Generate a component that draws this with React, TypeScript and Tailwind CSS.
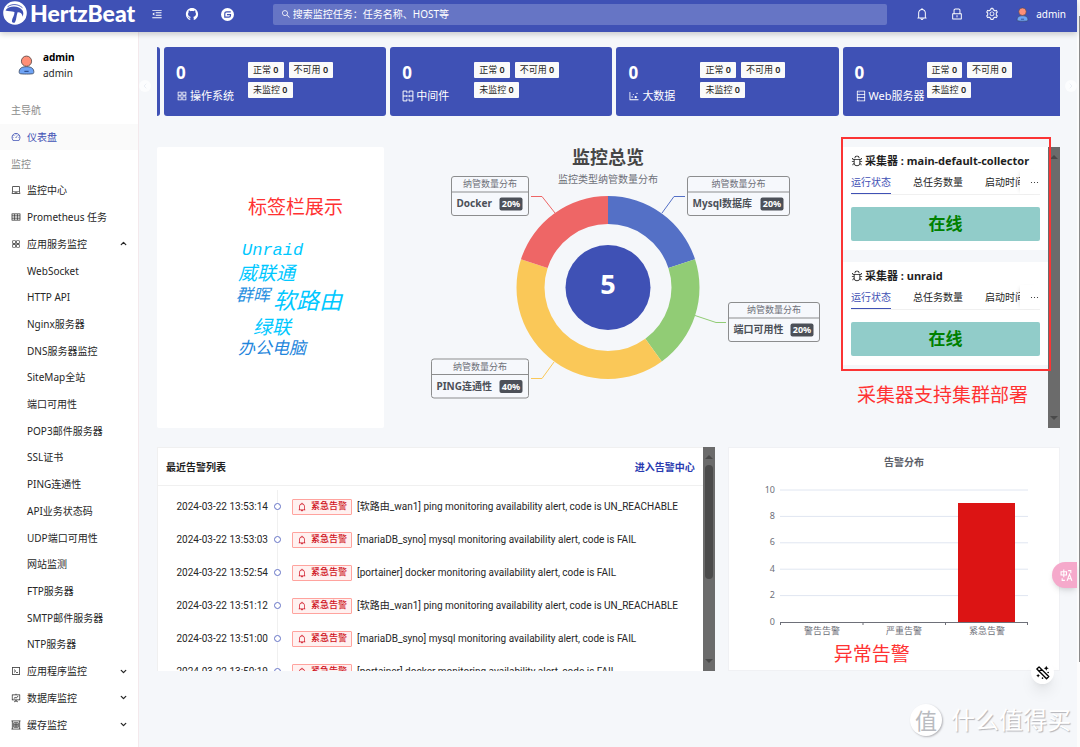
import React, { useState } from 'react';
import {
  AiFillGithub,
  AiOutlineAppstore,
  AiOutlineBell,
  AiOutlineBug,
  AiOutlineCode,
  AiOutlineDashboard,
  AiOutlineDatabase,
  AiOutlineDotChart,
  AiOutlineEllipsis,
  AiOutlineFundProjectionScreen,
  AiOutlineLaptop,
  AiOutlineLock,
  AiOutlineMenuFold,
  AiOutlineSearch,
  AiOutlineSetting,
  AiOutlineTable,
} from 'react-icons/ai';
import { ChevronDown, ChevronLeft, ChevronRight, ChevronUp } from 'lucide-react';

const SERVICE_ITEMS = [
  'WebSocket', 'HTTP API', 'Nginx服务器', 'DNS服务器监控', 'SiteMap全站', '端口可用性', 'POP3邮件服务器',
  'SSL证书', 'PING连通性', 'API业务状态码', 'UDP端口可用性', '网站监测', 'FTP服务器', 'SMTP邮件服务器', 'NTP服务器',
];

const MiddlewareIcon: React.FC<{ className?: string }> = ({ className }) => (
  <svg viewBox="0 0 22 22" className={className} fill="none" stroke="currentColor" strokeWidth="1.800" aria-hidden="true">
    <path d="M9 2H2v18h7M13 2h7v18h-7M9 2v4M9 16v4M13 2v4M13 16v4M2 11h7M13 11h7M9 9v4M13 9v4" />
  </svg>
);

const CacheIcon: React.FC<{ className?: string }> = ({ className }) => (
  <svg viewBox="0 0 22 22" className={className} fill="none" stroke="currentColor" strokeWidth="1.600" aria-hidden="true">
    <path d="M1 2h20M1 20h20M3 2v18M19 2v18M6 6h10v10H6zM6 9.500h10M6 13h10M11 6v10" />
  </svg>
);

const STATS = [
  { label: '操作系统', Icon: AiOutlineAppstore, box: 'flex-[222] rounded-[3px]' },
  { label: '中间件', Icon: MiddlewareIcon, box: 'flex-[222] rounded-[3px]' },
  { label: '大数据', Icon: AiOutlineDotChart, box: 'flex-[222] rounded-[3px]' },
  { label: 'Web服务器', Icon: AiOutlineDatabase, box: 'flex-[217] rounded-l-[3px]' },
];

const WORDS = [
  { text: 'Unraid', style: 'left-[85px] top-[92px] text-[17px] text-[#00c8ff]' },
  { text: '威联通', style: 'left-[81px] top-[116px] text-[19px] text-[#00c8ff]' },
  { text: '群晖', style: 'left-[79px] top-[138px] text-[17px] text-[#2a8fe0]' },
  { text: '软路由', style: 'left-[116px] top-[144px] text-[23px] text-[#00c8ff]' },
  { text: '绿联', style: 'left-[96px] top-[170px] text-[19px] text-[#00c8ff]' },
  { text: '办公电脑', style: 'left-[81px] top-[191px] text-[17px] text-[#1f86dc]' },
];

const ALERTS = [
  { time: '2024-03-22 13:53:14', text: '[软路由_wan1] ping monitoring availability alert, code is UN_REACHABLE' },
  { time: '2024-03-22 13:53:03', text: '[mariaDB_syno] mysql monitoring availability alert, code is FAIL' },
  { time: '2024-03-22 13:52:54', text: '[portainer] docker monitoring availability alert, code is FAIL' },
  { time: '2024-03-22 13:51:12', text: '[软路由_wan1] ping monitoring availability alert, code is UN_REACHABLE' },
  { time: '2024-03-22 13:51:00', text: '[mariaDB_syno] mysql monitoring availability alert, code is FAIL' },
  { time: '2024-03-22 13:50:19', text: '[portainer] docker monitoring availability alert, code is FAIL' },
];

const CX = 224;
const CY = 140.5;

const SLICES = [
  { from: 0, to: 72, color: '#5470c6' },
  { from: 72, to: 144, color: '#91cc75' },
  { from: 144, to: 288, color: '#fac858' },
  { from: 288, to: 360, color: '#ee6666' },
];

const CALLOUTS = [
  { name: 'Docker', value: '20%', x: 67.5, y: 29.5, w: 77, line: '147,49.5 158,49.5 171,66', color: '#ee6666' },
  { name: 'Mysql数据库', value: '20%', x: 303.5, y: 29.5, w: 102, line: '278,66 290,49.5 301,49.5', color: '#5470c6' },
  { name: '端口可用性', value: '20%', x: 344.5, y: 155.5, w: 91, line: '311,168.5 332,175.5 342,175.5', color: '#91cc75' },
  { name: 'PING连通性', value: '40%', x: 47.5, y: 212, w: 97, line: '147,231.5 158,231.5 170,215', color: '#fac858' },
];

const point = (r: number, deg: number) => {
  const a = (deg * Math.PI) / 180;
  return `${(CX + r * Math.sin(a)).toFixed(2)} ${(CY - r * Math.cos(a)).toFixed(2)}`;
};

const arc = (from: number, to: number) =>
  `M${point(91.5, from)} A91.5 91.5 0 0 1 ${point(91.5, to)} L${point(63.5, to)} A63.5 63.5 0 0 0 ${point(63.5, from)} Z`;

const UserAvatar: React.FC<{ className: string }> = ({ className }) => (
  <svg viewBox="0 0 20 24" className={className} aria-hidden="true">
    <path d="M2 22c-1-1-.8-4 .6-5.6C4 14.600 7 14 10 14s6 .6 7.400 2.400C18.800 18 19 21 18 22c-1 .9-15 .9-16 0z" fill="#6ea3f5" stroke="#3c4a63" strokeWidth="1" />
    <circle cx="10" cy="7.500" r="6" fill="#ff8f78" stroke="#5a4a4a" strokeWidth="1" />
    <path d="M7.500 19.500h5" stroke="#2d4f91" strokeWidth="1.400" />
  </svg>
);

const Header: React.FC = () => (
  <header className="relative z-10 flex h-8 items-center bg-[#3f51b5] text-white shadow-[0_2px_6px_rgba(0,0,0,0.2)]">
    <a href="#" className="flex w-[139px] shrink-0 items-center gap-[3px] pb-[6px] pl-[3px]" aria-label="HertzBeat">
      <svg viewBox="0 0 24 24" className="size-6 shrink-0">
        <circle cx="12" cy="12" r="11.800" fill="#fff" />
        <path d="M2.500 9.500C5 4.500 16 4 19.500 9.500c1.200 2 .9 4 .2 6.200C19.200 12.500 17 11 14.600 11.300c-1.400 3.500-1 7.500-2.600 9.900-1 1.200-3.200.5-3.100-1.200.2-3.200 2.700-5.400 2.600-9C8.800 10 5.500 10.300 2.500 9.500z" fill="#3f51b5" />
        <path d="M4.500 5.800C9 2.600 15 2.800 19.500 6.800" fill="none" stroke="#3f51b5" strokeWidth=".9" />
      </svg>
      <span className="font-[Lato] text-[23px] font-black leading-6">HertzBeat</span>
    </a>
    <nav className="flex w-[134px] shrink-0 items-center gap-[22px] pb-1 pl-3" aria-label="快捷入口">
      <button type="button" aria-label="收起菜单"><AiOutlineMenuFold className="size-3" /></button>
      <a href="#" aria-label="GitHub"><AiFillGithub className="size-[14px]" /></a>
      <a href="#" aria-label="Gitee">
        <svg viewBox="0 0 24 24" className="size-[13px]">
          <circle cx="12" cy="12" r="12" fill="#fff" />
          <path d="M18 7h-7.500C8.500 7 7 8.500 7 10.500V17h7.500c2 0 3-1.200 3-3v-1.600H11" fill="none" stroke="#3f51b5" strokeWidth="2.200" />
        </svg>
      </a>
    </nav>
    <label className="mb-1 flex h-[21px] flex-1 items-center gap-[2px] rounded-[2px] bg-[#6675c5] pl-2">
      <AiOutlineSearch className="size-[10px]" />
      <input
        type="text"
        aria-label="搜索"
        placeholder="搜索监控任务：任务名称、HOST等"
        className="w-full bg-transparent text-[10px] leading-4 text-white placeholder:text-white focus:outline-none"
      />
    </label>
    <div className="flex shrink-0 items-center gap-[21px] pb-1 pl-7 pr-[11px]">
      <button type="button" aria-label="告警"><AiOutlineBell className="size-[14px]" /></button>
      <button type="button" aria-label="锁屏"><AiOutlineLock className="size-[14px]" /></button>
      <button type="button" aria-label="设置"><AiOutlineSetting className="size-[14px]" /></button>
      <button type="button" className="-ml-1 flex items-center gap-[7px] text-[10px] leading-4">
        <UserAvatar className="h-[15px] w-[13px]" />
        admin
      </button>
    </div>
  </header>
);

const MenuLink: React.FC<{ icon: React.ReactNode; label: string; active?: boolean; arrow?: React.ReactNode }> = ({ icon, label, active, arrow }) => (
  <li className={active ? 'flex min-h-6 flex-1 items-center bg-[#fafafa] text-[#3f51b5]' : 'flex min-h-6 flex-1 items-center'}>
    <a href="#" className="flex w-full items-center gap-[6px] pl-[11px] pr-[10px]">
      {icon}
      <span className="flex-1">{label}</span>
      {arrow}
    </a>
  </li>
);

const Sidebar: React.FC = () => (
  <aside className="flex w-[139px] shrink-0 flex-col border-r border-[#f3e9ec] bg-white pb-[9px] text-[10px] leading-4 text-[#262626]">
    <div className="flex h-[65px] items-center gap-2 pl-[18px]">
      <UserAvatar className="h-[22px] w-[17px]" />
      <div>
        <div className="font-bold text-black">admin</div>
        <div>admin</div>
      </div>
    </div>
    <ul className="flex flex-1 flex-col">
      <li className="flex min-h-6 flex-1 items-center pl-[11px] text-[#8c8c8c]">主导航</li>
      <MenuLink icon={<AiOutlineDashboard className="size-[10px]" />} label="仪表盘" active />
      <li className="flex min-h-6 flex-1 items-center pl-[11px] text-[#8c8c8c]">监控</li>
      <MenuLink icon={<AiOutlineLaptop className="size-[10px]" />} label="监控中心" />
      <MenuLink icon={<AiOutlineTable className="size-[10px]" />} label="Prometheus 任务" />
      <MenuLink icon={<AiOutlineAppstore className="size-[10px]" />} label="应用服务监控" arrow={<ChevronUp size={9} strokeWidth={3.5} />} />
      {SERVICE_ITEMS.map(item => (
        <li key={item} className="flex min-h-6 flex-1 items-center pl-[27px]">
          <a href="#">{item}</a>
        </li>
      ))}
      <MenuLink icon={<AiOutlineCode className="size-[10px]" />} label="应用程序监控" arrow={<ChevronDown size={9} strokeWidth={3.5} />} />
      <MenuLink icon={<AiOutlineFundProjectionScreen className="size-[10px]" />} label="数据库监控" arrow={<ChevronDown size={9} strokeWidth={3.5} />} />
      <MenuLink icon={<CacheIcon className="size-[10px]" />} label="缓存监控" arrow={<ChevronDown size={9} strokeWidth={3.5} />} />
    </ul>
  </aside>
);

const Badge: React.FC<{ label: string }> = ({ label }) => (
  <span className="whitespace-nowrap rounded-[1px] bg-[#fafafa] px-[5px] text-[9px] leading-4 text-[#262626]">
    {label} <b className="font-semibold">0</b>
  </span>
);

const StatRow: React.FC = () => (
  <section className="flex h-[69px] gap-1" aria-label="监控统计">
    <div className="w-[3px] shrink-0 rounded-r-[3px] bg-[#3f51b5]" />
    {STATS.map(({ label, Icon, box }) => (
      <div key={label} className={`${box} flex min-w-0 bg-[#3f51b5] pl-3 pt-[15px] text-white`}>
        <div className="w-[72px] shrink-0 whitespace-nowrap">
          <div className="text-[17px] font-bold leading-[22px]">0</div>
          <div className="flex items-center gap-[2px] pt-1 text-[11px] leading-4">
            <Icon className="size-3 shrink-0" />
            {label}
          </div>
        </div>
        <div className="flex w-24 flex-wrap content-start gap-x-[5px] gap-y-1">
          <Badge label="正常" />
          <Badge label="不可用" />
          <Badge label="未监控" />
        </div>
      </div>
    ))}
  </section>
);

const OverviewChart: React.FC = () => (
  <section className="flex flex-1 justify-center" aria-label="监控总览">
    <svg viewBox="0 0 457 281" width="457" height="281" className="shrink-0 overflow-visible">
      <text x={CX} y="17" textAnchor="middle" fontSize="18" fontWeight="700" fill="#464646">监控总览</text>
      <text x={CX} y="36" textAnchor="middle" fontSize="10" fill="#6e7079">监控类型纳管数量分布</text>
      {SLICES.map(s => <path key={s.color} d={arc(s.from, s.to)} fill={s.color} />)}
      <circle cx={CX} cy={CY} r="42.500" fill="#3f51b5" />
      <text x={CX} y="147" textAnchor="middle" fontSize="27" fontWeight="700" fill="#fff">5</text>
      {CALLOUTS.map(c => (
        <g key={c.name}>
          <polyline points={c.line} fill="none" stroke={c.color} />
          <rect x={c.x} y={c.y} width={c.w} height="39" rx="2.500" fill="#f6f8fc" stroke="#8c8d8e" />
          <line x1={c.x} y1={c.y + 15.5} x2={c.x + c.w} y2={c.y + 15.5} stroke="#8c8d8e" />
          <text x={c.x + c.w / 2} y={c.y + 10.5} textAnchor="middle" fontSize="9" fill="#6e7079">纳管数量分布</text>
          <text x={c.x + 5} y={c.y + 30.5} fontSize="10" fontWeight="700" fill="#4c5058">{c.name}</text>
          <rect x={c.x + c.w - 29} y={c.y + 21} width="23" height="13" rx="2" fill="#4c5058" />
          <text x={c.x + c.w - 17.5} y={c.y + 30.5} textAnchor="middle" fontSize="9" fontWeight="700" fill="#fff">{c.value}</text>
        </g>
      ))}
    </svg>
  </section>
);

const CollectorCard: React.FC<{ name: string }> = ({ name }) => {
  const [tab, setTab] = useState('运行状态');
  return (
    <article className="h-[103px] bg-white px-2 pt-[5px]">
      <h3 className="flex items-center gap-[2px] text-[11px] font-bold leading-[18px] text-[#1f1f1f]">
        <AiOutlineBug className="size-3 shrink-0" />
        <span className="whitespace-nowrap">采集器 : {name}</span>
      </h3>
      <div className="flex h-[25px] items-stretch border-b border-[#f0f0f0] text-[10px] leading-[25px] text-[#262626]">
        <div className="flex min-w-0 flex-1 gap-[22px] overflow-hidden whitespace-nowrap">
          {['运行状态', '总任务数量', '启动时间'].map(t => (
            <button
              key={t}
              type="button"
              onClick={() => setTab(t)}
              className={t === tab ? 'shrink-0 border-b border-[#3f51b5] text-[#3f51b5]' : 'shrink-0'}
            >
              {t}
            </button>
          ))}
        </div>
        <button type="button" aria-label="更多" className="flex w-5 shrink-0 items-center justify-end shadow-[-3px_0_4px_-3px_rgba(0,0,0,0.15)]">
          <AiOutlineEllipsis className="size-[11px]" />
        </button>
      </div>
      <div className="mt-3 rounded-[2px] bg-[#91ccc9] text-center text-[17px] font-bold leading-[34px] text-[#008000]">在线</div>
    </article>
  );
};

const ScrollTrack: React.FC<{ thumb?: boolean }> = ({ thumb }) => (
  <div className="flex w-3 shrink-0 flex-col items-center justify-between bg-[#6b6b6b] py-2">
    <svg viewBox="0 0 8 4" className="h-1 w-2"><path d="M0 4 4 0l4 4z" fill="#4a4a4a" /></svg>
    {thumb && <div className="mb-auto mt-[6px] h-[114px] w-2 rounded-full bg-[#4b4b4b]" />}
    <svg viewBox="0 0 8 4" className="h-1 w-2"><path d="M0 0h8L4 4z" fill="#4a4a4a" /></svg>
  </div>
);

const AlertList: React.FC = () => (
  <section className="flex min-w-0 flex-[559] overflow-hidden">
    <div className="h-[224px] min-w-0 flex-1 overflow-hidden border-l border-t border-[#f0f0f0] bg-white">
      <div className="flex h-[38px] items-center justify-between border-b border-[#f0f0f0] px-2 text-[10px] font-bold leading-4">
        <h2 className="text-[#1f1f1f]">最近告警列表</h2>
        <a href="#" className="text-[#2a3bb0]">进入告警中心</a>
      </div>
      <ol className="pt-1 font-['Roboto','Noto_Sans_CJK_SC',sans-serif] text-[10px] text-[#262626]">
        {ALERTS.map(a => (
          <li key={a.time} className="flex h-[33px] items-center whitespace-nowrap">
            <time className="w-28 pr-[2px] text-right">{a.time}</time>
            <span className="flex h-full w-[15px] flex-col items-center">
              <span className="w-px flex-1 bg-[#f0f0f0]" />
              <span className="size-[7px] rounded-full border border-[#6573c6]" />
              <span className="w-px flex-1 bg-[#f0f0f0]" />
            </span>
            <span className="ml-[7px] mr-[5px] flex h-4 items-center gap-1 rounded-[1px] border border-[#ffa39e] bg-[#fff1f0] px-1 text-[9px] font-medium text-[#cf1322]">
              <AiOutlineBell className="size-[10px]" />
              紧急告警
            </span>
            {a.text}
          </li>
        ))}
      </ol>
    </div>
    <ScrollTrack thumb />
  </section>
);

const AlertChart: React.FC = () => (
  <section className="relative flex h-[224px] min-w-0 flex-[331] justify-center border border-[#f0f1f4] bg-white" aria-label="告警分布">
    <svg viewBox="0 0 331 224" width="331" height="224" className="shrink-0 overflow-visible">
      <text x="176" y="18" textAnchor="middle" fontSize="10" fontWeight="600" fill="#5d5f69">告警分布</text>
      {[10, 8, 6, 4, 2, 0].map((v, i) => (
        <g key={v}>
          {v > 0 && <line x1="52" x2="300" y1={42 + i * 26.4} y2={42 + i * 26.4} stroke="#e0e6f1" />}
          <text x="47" y={44.5 + i * 26.4} textAnchor="end" fontSize="9" fill="#6e7079">{v}</text>
        </g>
      ))}
      <rect x="230" y="55" width="57" height="119" fill="#dc1414" />
      <path d="M52 174.500h248M52.500 174v3M135 174v3M217.500 174v3M299.500 174v3" stroke="#6e7079" fill="none" />
      <text x="94" y="186" textAnchor="middle" fontSize="9" fill="#6e7079">警告告警</text>
      <text x="176" y="186" textAnchor="middle" fontSize="9" fill="#6e7079">严重告警</text>
      <text x="259" y="186" textAnchor="middle" fontSize="9" fill="#6e7079">紧急告警</text>
    </svg>
    <span className="absolute left-[105px] top-[194px] whitespace-nowrap text-[19px] leading-6 text-[#ff3232]">异常告警</span>
  </section>
);

const App: React.FC = () => (
  <div lang="zh-CN" className="flex min-h-screen bg-[#f5f7fa] font-['Noto_Sans','Noto_Sans_CJK_SC',sans-serif]">
    <div className="relative flex min-w-0 flex-1 flex-col">
      <Header />
      <div className="flex flex-1">
        <Sidebar />
        <main className="relative min-w-0 flex-1 pl-[18px] pr-[17px] pt-[15px]">
          <StatRow />
          <button type="button" aria-label="上一页" className="absolute left-0 top-12 flex size-3 items-center justify-center rounded-full bg-white/70 text-slate-200">
            <ChevronLeft size={8} />
          </button>
          <button type="button" aria-label="下一页" className="absolute right-0 top-12 flex size-3 items-center justify-center rounded-full bg-white/70 text-slate-200">
            <ChevronRight size={8} />
          </button>

          <div className="mt-[31px] flex h-[281px]">
            <section className="relative w-[227px] shrink-0 rounded-[2px] bg-white" aria-label="标签">
              <span className="absolute left-[91px] top-12 text-[19px] leading-6 text-[#ff3232]">标签栏展示</span>
              {WORDS.map(w => (
                <span key={w.text} className={`${w.style} absolute whitespace-nowrap font-['Liberation_Mono','Noto_Sans_CJK_SC',monospace] italic leading-6`}>
                  {w.text}
                </span>
              ))}
            </section>
            <OverviewChart />
            <section className="relative flex w-[219px] shrink-0" aria-label="采集器">
              <div className="flex min-w-0 flex-1 flex-col gap-3 pl-[2px]">
                <CollectorCard name="main-default-collector" />
                <CollectorCard name="unraid" />
              </div>
              <ScrollTrack />
              <div className="pointer-events-none absolute -top-[10px] left-0 h-[234px] w-[210px] border-2 border-[#fb3434]" />
              <span className="absolute left-4 top-[236px] whitespace-nowrap text-[19px] leading-6 text-[#ff3232]">采集器支持集群部署</span>
            </section>
          </div>

          <div className="mt-[19px] flex gap-[13px]">
            <AlertList />
            <AlertChart />
          </div>
        </main>
      </div>

      <button type="button" aria-label="翻译" className="absolute right-0 top-[562px] z-20 flex h-[26px] w-[25px] items-center justify-center rounded-l-full bg-[#f5a9cb] text-white shadow-md">
        <svg viewBox="0 0 24 24" className="ml-1 size-[13px]" fill="none" stroke="currentColor" strokeWidth="2">
          <path d="M2 5h10v6H2zM7 1v14M15 3h5v5M4 17v4h5M13 22l4.500-12L22 22M14.500 18h6" />
        </svg>
      </button>
      <button type="button" aria-label="工具" className="absolute right-[23px] top-[661px] z-20 flex size-[23px] items-center justify-center rounded-full bg-white text-black shadow-lg">
        <svg viewBox="0 0 24 24" className="size-[15px]" fill="none" stroke="currentColor" strokeWidth="2.200" strokeLinejoin="round">
          <path d="M3 6.500 6.500 3 22 18.500 18.500 22zM7 10.500 10.500 7" />
          <path d="m18 1 1.200 2.800L22 5l-2.800 1.200L18 9l-1.200-2.800L14 5l2.800-1.200zM5 14l1 2 2 1-2 1-1 2-1-2-2-1 2-1z" fill="currentColor" stroke="none" />
          <circle cx="21" cy="12" r="1.300" fill="currentColor" stroke="none" />
          <circle cx="12" cy="21" r="1.300" fill="currentColor" stroke="none" />
        </svg>
      </button>
      <div className="absolute right-[6px] top-[704px] flex items-center gap-[9px] text-[24px] leading-8 text-white [text-shadow:1px_1px_1px_#b4b4b8]">
        <span className="flex size-8 items-center justify-center rounded-full bg-white text-[22px] text-[#b9bbc0] shadow-[1px_1px_2px_#b4b4b8] [text-shadow:none]">值</span>
        什么值得买
      </div>
    </div>
    <div className="flex w-[3px] shrink-0 justify-end bg-[#fcfcfc] pt-4">
      <div className="h-[646px] w-px bg-[#8b8b8b]" />
    </div>
  </div>
);

export default App;
